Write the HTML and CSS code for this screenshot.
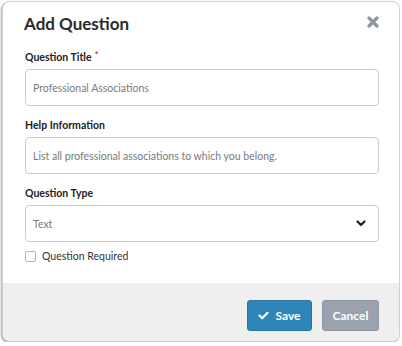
FILE: index.html
```html
<!DOCTYPE html>
<html lang="en">
<head>
    <meta charset="UTF-8">
    <title>Add Question</title>
    <link rel="stylesheet" href="styles.css">
</head>
<body>
    <!-- Modal -->
    <div class="modal">
        <div class="modal-header">
            <h2>Add Question</h2>
            <button class="close" type="button" aria-label="Close">
                <svg width="12" height="12" viewBox="0 0 12 12"><path d="M2 2L10 10M10 2L2 10" stroke="#8d96a4" stroke-width="3.2" stroke-linecap="round"/></svg>
            </button>
        </div>

        <form class="modal-body">
            <div class="form-group">
                <label for="title">Question Title<span class="req">*</span></label>
                <div class="field" id="title">Professional Associations</div>
            </div>

            <div class="form-group">
                <label for="help">Help Information</label>
                <div class="field" id="help">List all professional associations to which you belong.</div>
            </div>

            <div class="form-group">
                <label for="type">Question Type</label>
                <div class="field select" id="type">
                    <span>Text</span>
                    <svg width="10" height="7" viewBox="0 0 10 7"><path d="M1.5 1.5L5 5L8.5 1.5" fill="none" stroke="#222" stroke-width="2.2" stroke-linecap="round" stroke-linejoin="round"/></svg>
                </div>
            </div>

            <div class="check-row">
                <span class="checkbox"></span>
                <span>Question Required</span>
            </div>
        </form>

        <!-- Footer -->
        <div class="modal-footer">
            <button class="btn btn-save" type="button">
                <svg width="11" height="9" viewBox="0 0 11 9"><path d="M1.5 4.5L4.2 7.2L9.5 1.8" fill="none" stroke="#fff" stroke-width="2.2" stroke-linecap="round" stroke-linejoin="round"/></svg>
                Save
            </button>
            <button class="btn btn-cancel" type="button">Cancel</button>
        </div>
    </div>
</body>
</html>
```

FILE: styles.css
```css
/* Basic reset */
* {
    margin: 0;
    padding: 0;
    box-sizing: border-box;
}

body {
    font-family: Lato, "Open Sans", sans-serif;
    background-color: #fff;
    color: #333;
    padding: 1px 2px 0 2px;
}

/* Modal */
.modal {
    width: 398px;
    height: 341px;
    background-color: #fff;
    border: 1px solid #d0d0d0;
    border-radius: 8px;
    box-shadow: -1px 1px 2px rgba(0, 0, 0, 0.35);
    overflow: hidden;
    display: flex;
    flex-direction: column;
}

.modal-header {
    display: flex;
    justify-content: space-between;
    align-items: center;
    padding: 10px 20px 0 21px;
}

.modal-header h2 {
    font-size: 17px;
    line-height: 24px;
    font-weight: 700;
    color: #2b2b2b;
}

.close {
    border: none;
    background: none;
    width: 12px;
    height: 12px;
    display: flex;
    margin-top: -4px;
}

.modal-body {
    padding: 13px 20px 0 22px;
    flex: 1;
}

.form-group {
    margin-bottom: 11px;
}

.form-group label {
    display: block;
    font-size: 10.5px;
    font-weight: 700;
    line-height: 16px;
    color: #222;
    margin-bottom: 4px;
}

.req {
    display: inline-block;
    color: #e0353b;
    font-size: 10px;
    vertical-align: top;
    line-height: 10px;
    margin-left: 3px;
}

.field {
    height: 37px;
    border: 1px solid #c9ccd1;
    border-radius: 4px;
    padding: 0 7px;
    font-size: 10.5px;
    color: #7a7a7a;
    display: flex;
    align-items: center;
}

.field.select {
    justify-content: space-between;
    padding-right: 12px;
}

.check-row {
    display: flex;
    align-items: center;
    margin-top: -5px;
    height: 16px;
    font-size: 10.5px;
    color: #333;
}

.checkbox {
    width: 11px;
    height: 11px;
    border: 1px solid #b5b5b5;
    border-radius: 2px;
    margin: 0 6px 0 0;
}

/* Footer */
.modal-footer {
    background-color: #efefef;
    height: 58px;
    display: flex;
    justify-content: flex-end;
    gap: 10px;
    padding: 17px 20px 0 0;
}

.btn {
    height: 31px;
    border-radius: 3px;
    font-family: Lato, sans-serif;
    font-size: 12px;
    font-weight: 700;
    color: #fff;
    display: flex;
    align-items: center;
    justify-content: center;
    gap: 6px;
}

.btn-save {
    width: 65px;
    background-color: #2e86b8;
    border: 1px solid #2676a4;
}

.btn-cancel {
    width: 57px;
    background-color: #9aa2ae;
    border: 1px solid #8e96a2;
}
```
